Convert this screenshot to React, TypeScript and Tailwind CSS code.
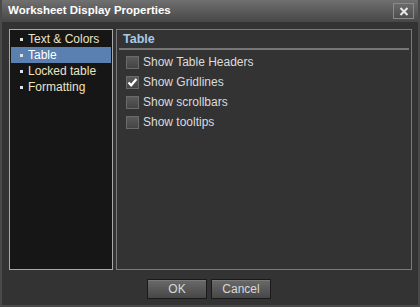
import React from "react";

const items = ["Text & Colors", "Table", "Locked table", "Formatting"];
const opts = [
  { label: "Show Table Headers", checked: false },
  { label: "Show Gridlines", checked: true },
  { label: "Show scrollbars", checked: false },
  { label: "Show tooltips", checked: false },
];

function Check({ checked }: { checked: boolean }) {
  return (
    <div className="w-[13px] h-[13px] border border-[#6a6a6a] bg-gradient-to-b from-[#5a5a5a] to-[#444] flex items-center justify-center shrink-0">
      {checked && (
        <svg width="11" height="11" viewBox="0 0 11 11">
          <path d="M1.5 5.5 L4.2 8.3 L9.5 2" stroke="#fff" strokeWidth="2.2" fill="none" />
        </svg>
      )}
    </div>
  );
}

export default function App() {
  return (
    <div
      className="w-[420px] h-[307px] bg-[#333333] flex flex-col border-l-2 border-r-2 border-b-2 border-[#4a4a4a] overflow-hidden"
      style={{ fontFamily: '"Liberation Sans", Arial, sans-serif' }}
    >
      <div className="h-[22px] bg-gradient-to-b from-[#707070] to-[#474747] flex items-center justify-between pl-[6px] pr-[4px] shrink-0">
        <span className="text-white font-bold text-[11.5px]">Worksheet Display Properties</span>
        <div className="w-[21px] h-[16px] border border-[#8a8a8a] bg-gradient-to-b from-[#6a6a6a] to-[#4e4e4e] flex items-center justify-center">
          <svg width="10" height="9" viewBox="0 0 10 9">
            <path d="M1.5 1 L8.5 8 M8.5 1 L1.5 8" stroke="#e8e8e8" strokeWidth="2" />
          </svg>
        </div>
      </div>
      <div className="flex gap-[3px] pl-[7px] pr-[6px] pt-[7px] h-[248px] shrink-0">
        <div className="w-[104px] border border-[#a8a8a8] bg-[#161616] pt-[1px] px-[1px]">
          {items.map((it) => (
            <div
              key={it}
              className={`h-[16px] flex items-center pl-[9px] text-[12px] ${it === "Table" ? "bg-[#5a80b2] text-white" : "text-[#ece4c4]"}`}
            >
              <span className="w-[3px] h-[3px] bg-[#e0e0e0] mr-[5px]" />
              {it}
            </div>
          ))}
        </div>
        <div className="flex-1 border border-[#7a7a7a] px-[2px]">
          <div className="h-[20px] border-b-2 border-[#777] flex items-center pl-[4px] pt-[1px] text-[#a8c8ea] font-bold text-[12.5px]">
            Table
          </div>
          <div className="flex flex-col pl-[7px] pt-[2px]">
            {opts.map((o) => (
              <div key={o.label} className="h-[20px] flex items-center gap-[4px] text-[12px] text-[#dcdcdc]">
                <Check checked={o.checked} />
                <span>{o.label}</span>
              </div>
            ))}
          </div>
        </div>
      </div>
      <div className="flex justify-center gap-[4px] pt-[9px] pr-[2px]">
        <button className="w-[60px] h-[20px] border border-[#1a1a1a] bg-gradient-to-b from-[#6a6a6a] to-[#474747] text-[12px] text-[#d8d8d8] shadow-[inset_0_1px_0_#7a7a7a]">
          OK
        </button>
        <button className="w-[60px] h-[20px] border border-[#1a1a1a] bg-gradient-to-b from-[#6a6a6a] to-[#474747] text-[12px] text-[#d8d8d8] shadow-[inset_0_1px_0_#7a7a7a]">
          Cancel
        </button>
      </div>
    </div>
  );
}
